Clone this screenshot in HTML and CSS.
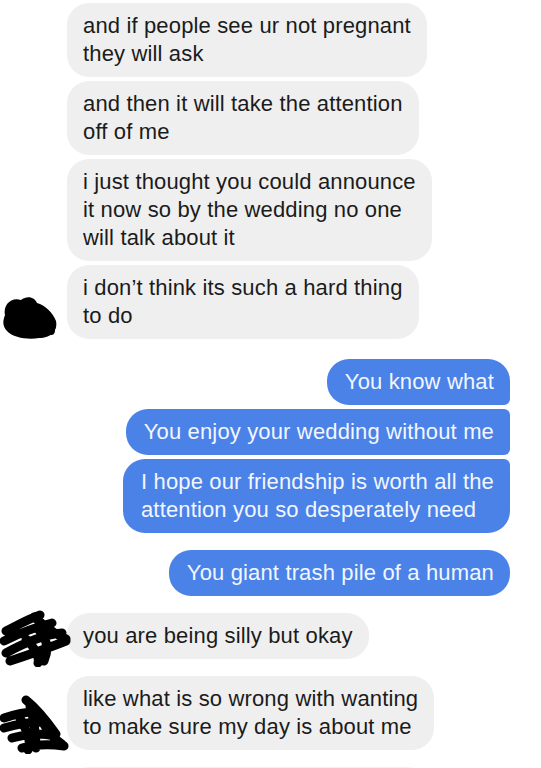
FILE: index.html
```html
<!DOCTYPE html>
<html lang="en">
<head>
    <meta charset="UTF-8">
    <meta name="viewport" content="width=device-width, initial-scale=1.0">
    <title>Chat</title>
    <link rel="stylesheet" href="styles.css">
</head>
<body>
    <div class="thread">
        <div class="group them">
            <div class="avatar">
                <svg class="scribble s1" width="58" height="48" viewBox="0 0 58 48">
                    <path d="M4 22 C2 12 10 4 20 7 C26 2 34 4 36 10 C44 12 52 20 55 28 C57 38 50 45 38 45 C28 47 12 45 6 38 C1 33 2 27 4 22 Z" fill="#000"/>
                    <path d="M8 20 C14 14 22 14 28 18 M10 36 C22 32 36 34 50 38" fill="none" stroke="#000" stroke-width="8" stroke-linecap="round"/>
                </svg>
            </div>
            <div class="bubbles">
                <div class="bubble">and if people see ur not pregnant<br>they will ask</div>
                <div class="bubble">and then it will take the attention<br>off of me</div>
                <div class="bubble">i just thought you could announce<br>it now so by the wedding no one<br>will talk about it</div>
                <div class="bubble">i don’t think its such a hard thing<br>to do</div>
            </div>
        </div>

        <div class="group me first">
            <div class="bubbles">
                <div class="bubble">You know what</div>
                <div class="bubble">You enjoy your wedding without me</div>
                <div class="bubble">I hope our friendship is worth all the<br>attention you so desperately need</div>
            </div>
        </div>

        <div class="group me">
            <div class="bubbles">
                <div class="bubble">You giant trash pile of a human</div>
            </div>
        </div>

        <div class="group them">
            <div class="avatar">
                <svg class="scribble s2" width="74" height="58" viewBox="0 0 74 58">
                    <path d="M6 22 C18 16 28 10 40 6 M4 32 C20 24 36 18 52 14 M6 44 C24 34 42 26 62 24 M10 52 C28 46 46 40 66 32 M34 8 C44 16 52 24 66 30 M38 20 C46 28 50 38 44 52 M26 30 C34 38 40 46 38 54" fill="none" stroke="#000" stroke-width="9" stroke-linecap="round" stroke-linejoin="round"/>
                </svg>
            </div>
            <div class="bubbles">
                <div class="bubble">you are being silly but okay</div>
            </div>
        </div>

        <div class="group them">
            <div class="avatar">
                <svg class="scribble s3" width="72" height="62" viewBox="0 0 72 62">
                    <path d="M26 8 C36 16 46 28 56 42 M4 26 C16 22 26 20 34 20 M4 36 C18 32 30 30 40 30 M12 46 C26 42 40 40 54 44 M22 56 C36 52 50 52 64 54 M30 14 C34 28 36 42 36 56 M40 26 C46 36 52 46 62 52 M20 26 C26 38 32 48 28 58" fill="none" stroke="#000" stroke-width="9" stroke-linecap="round" stroke-linejoin="round"/>
                </svg>
            </div>
            <div class="bubbles">
                <div class="bubble">like what is so wrong with wanting<br>to make sure my day is about me</div>
            </div>
        </div>

        <div class="group them">
            <div class="avatar"></div>
            <div class="bubbles">
                <div class="bubble blank"></div>
            </div>
        </div>
    </div>
</body>
</html>
```

FILE: styles.css
```css
* {
    box-sizing: border-box;
    margin: 0;
    padding: 0;
}

body {
    background: #fff;
    font-family: 'Liberation Sans', Arial, sans-serif;
    overflow: hidden;
}

.thread {
    display: flex;
    flex-direction: column;
    gap: 17px;
    padding: 3px 31px 0 0;
}

.group {
    display: flex;
}

.group.me {
    justify-content: flex-end;
}

.group.first {
    margin-top: 3px;
}

.avatar {
    position: relative;
    width: 67px;
    flex-shrink: 0;
}

.scribble {
    position: absolute;
    display: block;
    left: 0;
}

.s1 {
    left: 1px;
    bottom: -2px;
}

.s2 {
    bottom: -8px;
}

.s3 {
    bottom: -4px;
}

.bubbles {
    display: flex;
    flex-direction: column;
    gap: 4px;
}

.me .bubbles {
    align-items: flex-end;
}

.them .bubbles {
    align-items: flex-start;
}

.bubble {
    font-size: 22px;
    line-height: 28px;
    letter-spacing: 0.15px;
    padding: 9px 16px;
    border-radius: 22px;
}

.them .bubble {
    background: #efefef;
    color: #1b1b1b;
}

.me .bubble {
    background: #4a82e8;
    color: #f2f6ff;
    padding: 9px 16px 9px 18px;
}

.me .bubble:not(:last-child) {
    border-bottom-right-radius: 6px;
}

.me .bubble:not(:first-child) {
    border-top-right-radius: 6px;
}

.bubble.blank {
    width: 362px;
    height: 46px;
}
```
